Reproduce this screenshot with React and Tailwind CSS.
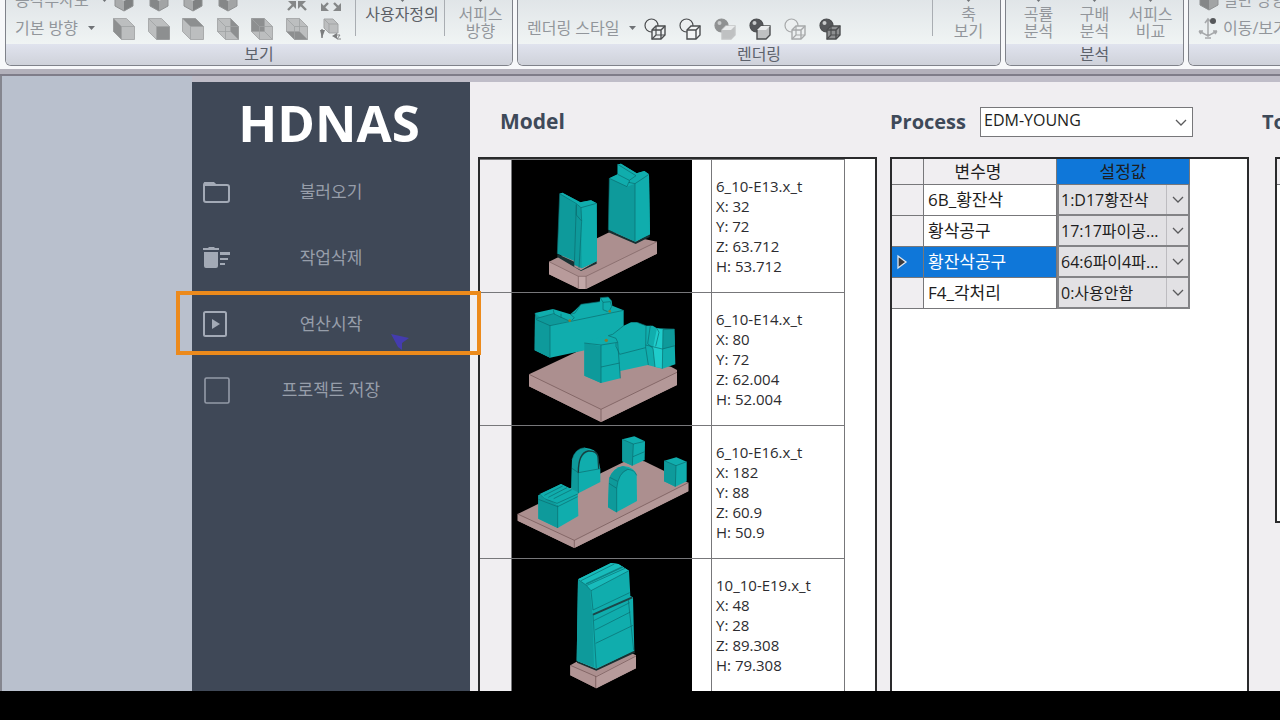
import { useState } from 'react'
import clsx from 'clsx'

const MODELS = [
  { name: '6_10-E13.x_t', x: '32', y: '72', z: '63.712', h: '53.712', Shape: ShapeE13 },
  { name: '6_10-E14.x_t', x: '80', y: '72', z: '62.004', h: '52.004', Shape: ShapeE14 },
  { name: '6_10-E16.x_t', x: '182', y: '88', z: '60.9', h: '50.9', Shape: ShapeE16 },
  { name: '10_10-E19.x_t', x: '48', y: '28', z: '89.308', h: '79.308', Shape: ShapeE19 },
]

const VARIABLES = [
  { name: '6B_황잔삭', value: '1:D17황잔삭' },
  { name: '황삭공구', value: '17:17파이공...' },
  { name: '황잔삭공구', value: '64:6파이4파...' },
  { name: 'F4_각처리', value: '0:사용안함' },
]

/* ---------- ribbon icons ---------- */

const FACES = {
  left: '0,0 8,8 8,21 0,13',
  front: '8,8 21,8 21,21 8,21',
  top: '0,0 13,0 21,8 8,8',
  right: '13,0 21,8 21,21 13,13',
  back: '0,0 13,0 13,13 0,13',
  bottom: '0,13 13,13 21,21 8,21',
}

function FaceCube({ face }) {
  return (
    <svg width="22" height="22" viewBox="-0.5 -0.5 22 22" aria-hidden="true">
      <polygon points="0,0 13,0 21,8 21,21 8,21 0,13" fill="#bcbebf" stroke="#a9abac" />
      <polygon points={FACES[face]} fill="#8d8f90" />
      <path d={face === 'left' || face === 'front' || face === 'top' ? 'M0 0L8 8H21M8 8V21' : 'M13 0V13H0M13 13L21 21M8 8H21M8 8V21M0 0L8 8'}
        fill="none" stroke="#a0a2a3" strokeWidth="0.8" />
    </svg>
  )
}

function IsoCube({ tone }) {
  return (
    <svg width="22" height="22" viewBox="0 0 22 22" aria-hidden="true">
      <polygon points="2,6 11,1 20,6 11,11" fill="#b9bbbc" />
      <polygon points="2,6 11,11 11,21 2,16" fill={tone === 'left' ? '#a9abac' : '#858788'} />
      <polygon points="20,6 11,11 11,21 20,16" fill={tone === 'left' ? '#7f8182' : '#a2a4a5'} />
      <polygon points="2,6 11,1 20,6 20,16 11,21 2,16" fill="none" stroke="#8f9192" />
    </svg>
  )
}

function ArrowsIcon({ out }) {
  return (
    <svg width="22" height="22" viewBox="0 0 22 22" fill="#858788" stroke="#858788" strokeWidth="2.4" aria-hidden="true">
      {out ? (
        <>
          <path d="M8 13L4 17M14 13L18 17M8 8L4 4M14 8L18 4" />
          <path d="M1 21V13L9 21ZM21 21V13L13 21Z" stroke="none" />
        </>
      ) : (
        <>
          <path d="M2 20L7 15M20 20L15 15M2 2L7 7M20 2L15 7" />
          <path d="M10 11V19L2 11ZM12 11V19L20 11Z" stroke="none" />
        </>
      )}
    </svg>
  )
}

function NormalIcon() {
  return (
    <svg width="22" height="22" viewBox="0 0 22 22" aria-hidden="true">
      <polygon points="4,1 13,1 18,6 18,15 9,15 4,10" fill="#bcbebf" stroke="#a3a5a6" />
      <path d="M4 1L9 6H18M9 6V15" fill="none" stroke="#a3a5a6" />
      <path d="M2 11V20" stroke="#858788" strokeWidth="1.5" />
      <path d="M0 12H5L2 20ZM12 18L17 15V21Z" fill="#7b7d7e" />
      <path d="M16 17H20L17 21H21" fill="none" stroke="#858788" />
    </svg>
  )
}

function RenderIcon({ sphere, cube, faded }) {
  const line = faded ? '#a7a9aa' : '#4b4d4f'
  const ball = { none: '#eceff0', mid: '#8f9192', dark: '#55575a' }[sphere]
  const box = { wire: '#eceff0', hidden: '#f2f4f4', solid: '#bfc1c2', dark: '#8d8f91' }[cube]
  return (
    <svg width="22" height="22" viewBox="0 0 22 22" aria-hidden="true">
      <circle cx="7.5" cy="7.5" r="6.5" fill={ball} stroke={sphere === 'mid' ? '#8f9192' : line} strokeWidth="1.2" />
      {sphere !== 'none' && <circle cx="5.5" cy="5" r="2" fill="#c9cbcc" />}
      <polygon points="8,12 12,8 21,8 21,17 17,21 8,21" fill={box}
        stroke={cube === 'solid' && faded ? '#c3c5c6' : line} strokeWidth="1.4" />
      {cube !== 'solid' && (
        <path d="M8 12H17L21 8M17 12V21" fill="none" stroke={line} strokeWidth="1.4" />
      )}
      {(cube === 'wire' || cube === 'dark') && (
        <path d="M12 8V17H21M12 17L8 21" fill="none" stroke={line} strokeWidth="1.2" />
      )}
      {cube === 'solid' && <path d="M8 12L12 8H21L17 12Z" fill="#e9ebec" />}
    </svg>
  )
}

function Caret() {
  return (
    <svg width="7" height="4" viewBox="0 0 7 4" aria-hidden="true">
      <path d="M0 0H7L3.5 4Z" fill="#6f7276" />
    </svg>
  )
}

function Chevron() {
  return (
    <svg width="12" height="7" viewBox="0 0 12 7" fill="none" stroke="#5a5a5c" strokeWidth="1.3" aria-hidden="true">
      <path d="M1 1L6 6L11 1" />
    </svg>
  )
}

/* ---------- ribbon ---------- */

function RibbonGroup({ label, className, children }) {
  return (
    <section className={clsx('flex flex-col h-24 shrink-0 rounded-b-md border border-t-0 border-[#7f828a] overflow-hidden', className)}>
      <div className="flex flex-1 items-end bg-linear-to-b from-[#d6dbe0] to-[#f0f4f4]">{children}</div>
      <div className="h-[21px] text-center leading-5 text-[#5d626c] bg-linear-to-b from-[#e0e3ee] to-[#cfd2da]">{label}</div>
    </section>
  )
}

function Divider() {
  return <div className="mb-2 w-px self-stretch bg-[#a9adb2]" />
}

function RibbonButton({ lines, className }) {
  return (
    <button className={clsx('flex flex-col items-center shrink-0 h-[50px] leading-[17px]', className)}>
      <span className="flex h-3 items-end pb-1"><Caret /></span>
      {lines.map(l => <span key={l}>{l}</span>)}
    </button>
  )
}

function IconButton({ title, children }) {
  return <button aria-label={title} className="flex w-[35px] justify-start">{children}</button>
}

function Ribbon() {
  return (
    <header className="flex h-[69px] shrink-0 items-end gap-1 overflow-hidden bg-[#f7f8fa] pl-[5px] pb-[3px] whitespace-nowrap text-[#92969b]">
      <RibbonGroup label="보기" className="w-[508px]">
        <div className="w-[107px] pb-[2px] pl-[9px]">
          <button className="flex h-7 items-center gap-3">등각투사도 <Caret /></button>
          <button className="flex h-7 items-center gap-[10px]">기본 방향 <Caret /></button>
        </div>
        <div className="w-[242px] pb-px">
          <div className="flex h-7 items-center">
            <IconButton title="등각 1"><IsoCube tone="left" /></IconButton>
            <IconButton title="등각 2"><IsoCube tone="right" /></IconButton>
            <IconButton title="등각 3"><IsoCube tone="left" /></IconButton>
            <IconButton title="등각 4"><IsoCube tone="right" /></IconButton>
            <span className="w-[35px]" />
            <IconButton title="축소"><ArrowsIcon /></IconButton>
            <IconButton title="확대"><ArrowsIcon out /></IconButton>
          </div>
          <div className="flex h-7 items-center">
            <IconButton title="좌측"><FaceCube face="left" /></IconButton>
            <IconButton title="정면"><FaceCube face="front" /></IconButton>
            <IconButton title="윗면"><FaceCube face="top" /></IconButton>
            <IconButton title="우측"><FaceCube face="right" /></IconButton>
            <IconButton title="배면"><FaceCube face="back" /></IconButton>
            <IconButton title="아랫면"><FaceCube face="bottom" /></IconButton>
            <IconButton title="수직"><NormalIcon /></IconButton>
          </div>
        </div>
        <Divider />
        <RibbonButton lines={['사용자정의']} className="w-[88px] pl-1 text-[#5c6066]" />
        <Divider />
        <RibbonButton lines={['서피스', '방향']} className="flex-1 pl-1" />
      </RibbonGroup>

      <RibbonGroup label="렌더링" className="w-[484px]">
        <button className="flex h-[30px] w-[126px] items-center gap-[10px] pb-[2px] pl-[9px]">렌더링 스타일 <Caret /></button>
        <div className="flex h-[29px] flex-1 items-center pb-px">
          <IconButton title="와이어프레임"><RenderIcon sphere="none" cube="wire" /></IconButton>
          <IconButton title="은선 제거"><RenderIcon sphere="none" cube="hidden" /></IconButton>
          <IconButton title="음영"><RenderIcon sphere="mid" cube="solid" faded /></IconButton>
          <IconButton title="음영 모서리"><RenderIcon sphere="dark" cube="solid" /></IconButton>
          <IconButton title="은선"><RenderIcon sphere="none" cube="wire" faded /></IconButton>
          <IconButton title="음영 와이어"><RenderIcon sphere="dark" cube="dark" /></IconButton>
        </div>
        <Divider />
        <RibbonButton lines={['축', '보기']} className="w-[67px] pl-1" />
      </RibbonGroup>

      <RibbonGroup label="분석" className="w-[179px]">
        <div className="flex flex-1 justify-center">
          <RibbonButton lines={['곡률', '분석']} className="w-14" />
          <RibbonButton lines={['구배', '분석']} className="w-14" />
          <RibbonButton lines={['서피스', '비교']} className="w-14" />
        </div>
      </RibbonGroup>

      <RibbonGroup label="" className="w-[240px]">
        <div className="pb-[2px] pl-[9px]">
          <button className="flex h-7 items-center gap-[3px]"><IsoCube tone="right" />일반 방향</button>
          <button className="flex h-7 items-center gap-[3px]">
            <svg width="22" height="22" viewBox="0 0 22 22" fill="none" stroke="#a6a8aa" strokeWidth="1.5" aria-hidden="true">
              <path d="M10 3V20M1 14L10 19L19 14M1 14H5M1 14L3 17M19 14H15M19 14L17 17M7 6L10 2L13 5M7 21H13" />
              <circle cx="15" cy="4" r="3" fill="#55575a" stroke="none" />
            </svg>
            이동/보기
          </button>
        </div>
      </RibbonGroup>
    </header>
  )
}

/* ---------- sidebar ---------- */

function FolderIcon() {
  return (
    <svg width="28" height="24" viewBox="0 0 28 24" aria-hidden="true">
      <path d="M3 3H10L13 5H24Q26 5 26 7V20Q26 22 24 22H3Q1 22 1 20V5Q1 3 3 3Z" fill="none" stroke="#a3aab6" strokeWidth="2" />
      <path d="M1 2H11L14 6H2Z" fill="#a3aab6" />
    </svg>
  )
}

function TrashIcon() {
  return (
    <svg width="28" height="24" viewBox="0 0 28 24" fill="#a3aab6" aria-hidden="true">
      <path d="M0 2H5L6 1H11L12 2H16V4H0ZM1 6H15V20Q15 22 13 22H3Q1 22 1 20ZM17 6H27V9H17ZM17 12H25V14H17ZM17 17H22V19H17Z" />
    </svg>
  )
}

function PlayIcon() {
  return (
    <svg width="28" height="28" viewBox="0 0 28 28" aria-hidden="true">
      <rect x="1" y="2" width="22" height="24" rx="1.5" fill="none" stroke="#a3aab6" strokeWidth="2" />
      <path d="M9 9V19L17 14Z" fill="#a3aab6" />
    </svg>
  )
}

function SquareIcon() {
  return (
    <svg width="28" height="28" viewBox="0 0 28 28" aria-hidden="true">
      <rect x="2" y="2" width="24" height="25" rx="1.5" fill="none" stroke="#949ba8" strokeWidth="1.6" />
    </svg>
  )
}

const MENU = [
  { label: '불러오기', Icon: FolderIcon },
  { label: '작업삭제', Icon: TrashIcon },
  { label: '연산시작', Icon: PlayIcon },
  { label: '프로젝트 저장', Icon: SquareIcon },
]

function Sidebar() {
  return (
    <nav className="w-[278px] shrink-0 bg-[#3f4857]">
      <h1 className="flex h-[77px] items-center justify-center pt-1 pr-1 text-[51px] font-bold leading-none text-white">HDNAS</h1>
      {MENU.map(({ label, Icon }, i) => (
        <div key={label} className="relative">
          <button className="grid h-[66px] w-full grid-cols-[48px_1fr_48px] items-center text-[17px] text-[#979eaa]">
            <span className="pl-[11px]"><Icon /></span>
            <span>{label}</span>
          </button>
          {i === 2 && (
            <>
              <div className="absolute z-10 -left-4 -right-[11px] top-0 h-16 border-4 border-[#ec8a1c] pointer-events-none" />
              <svg className="absolute left-[198px] top-[42px]" width="20" height="18" viewBox="0 0 20 18" aria-hidden="true">
                <path d="M1 1L19 5L12 10V17L8 14Z" fill="#443cae" />
              </svg>
            </>
          )}
        </div>
      ))}
    </nav>
  )
}

/* ---------- model previews ---------- */

const TEAL = '#10adad'
const TEAL_DARK = '#0e9a9b'
const TEAL_LIGHT = '#18bcbc'
const EDGE = '#0a6a6c'
const BASE = '#ac8f8f'
const BASE_SIDE = '#b29696'

function ShapeE13() {
  return (
    <svg width="180" height="132" viewBox="3 15 540 396" strokeWidth="2" strokeLinejoin="round" aria-hidden="true">
      <polygon points="114,320 298,230 438,260 438,296 225,402 205,402 114,358" fill={BASE} />
      <polygon points="114,320 202,364 205,402 114,358" fill="#b89b9b" />
      <polygon points="225,364 438,260 438,296 225,402" fill={BASE_SIDE} />
      <polygon points="202,364 225,364 225,402 205,402" fill="#c2a7a7" />
      <path d="M114 320L202 364H225L438 260M202 364V402M225 364V402" fill="none" stroke="#7c6161" />
      <polygon points="292,224 374,260 416,236 416,246 374,267 292,232" fill="#173032" />
      <polygon points="139,297 190,320 190,335 210,346 257,318 257,326 210,348 139,306" fill="#173032" />
      <polygon points="295,70 320,58 320,28 330,26 377,55 400,48 414,58 417,238 372,260 292,224" fill={TEAL_DARK} />
      <polygon points="372,86 414,58 417,238 372,260" fill={TEAL} />
      <polygon points="320,28 330,26 377,55 400,48 414,58 372,86 348,95 295,70 320,58" fill={TEAL} />
      <path d="M320 28L375 62L355 76L320 58M295 70L348 95L353 82L372 86V260M355 76V84M372 86L414 58M292 224L295 70" fill="none" stroke={EDGE} />
      <polygon points="146,116 154,113 208,142 240,136 257,145 258,318 212,340 190,330 190,318 139,296" fill={TEAL_DARK} />
      <polygon points="210,158 257,145 258,318 212,340" fill={TEAL} />
      <polygon points="146,116 154,113 208,142 240,136 257,145 210,158 195,148" fill={TEAL} />
      <path d="M146 116L196 146L190 330M196 146L210 158L212 198L204 340M196 150V180L212 198M210 158L257 145M139 296L146 116" fill="none" stroke={EDGE} />
    </svg>
  )
}

function ShapeE14() {
  return (
    <svg width="180" height="132" viewBox="33 24 540 396" strokeWidth="2" strokeLinejoin="round" aria-hidden="true">
      <polygon points="84,268 250,190 510,245 528,255 528,300 300,411 84,304" fill={BASE} />
      <polygon points="300,373 528,262 528,300 300,411" fill="#b49898" />
      <polygon points="84,268 300,373 300,411 84,304" fill="#b19494" />
      <path d="M84 268L300 373L528 262M300 373V411" fill="none" stroke="#6e5252" />
      <polygon points="102,84 156,72 208,88 222,76 240,58 296,50 298,38 322,36 332,48 334,62 368,76 368,125 338,150 280,190 147,218 101,196" fill={TEAL} />
      <polygon points="102,84 147,122 147,218 101,196" fill={TEAL_DARK} />
      <polygon points="106,100 158,88 182,96 205,108 147,122" fill={TEAL_DARK} />
      <path d="M102 84L106 104L147 122L368 76M147 122V218M108 100L158 86L178 96L205 108M156 72L160 88M180 86V98M208 88L220 98L212 106M208 88L222 84L240 58L296 50M298 38L306 52L328 50L332 64L325 78M298 38L322 36L332 48M306 52V74L320 80" fill="none" stroke={EDGE} />
      <polygon points="250,174 320,148 335,150 368,122 390,112 408,112 435,122 455,122 468,130 520,132 523,238 484,251 440,240 358,258 358,280 300,294 250,272" fill={TEAL} />
      <polygon points="250,174 300,184 300,294 250,272" fill={TEAL_DARK} />
      <polygon points="486,134 520,132 522,184 484,192" fill={TEAL_DARK} />
      <polygon points="468,130 486,134 484,250 462,246 456,190" fill="#1fcccb" />
      <path d="M250 174L300 180L350 172L345 160L322 152L335 148L368 122M300 180V294M300 246L356 234M350 172L358 280M346 186L356 208L434 188M408 112L435 122L434 188L442 240M448 122L440 176L456 190L462 246M468 130L474 142L464 184M520 132L486 134L484 251M434 180L484 192L522 182M345 174V186" fill="none" stroke={EDGE} />
      <circle cx="316" cy="166" r="5" fill="#8a7a2e" />
      <circle cx="326" cy="79" r="4" fill="#8a7a2e" />
      <circle cx="206" cy="107" r="4" fill="#8a7a2e" />
    </svg>
  )
}

function ShapeE16() {
  return (
    <svg width="180" height="132" viewBox="33 18 540 396" strokeWidth="2" strokeLinejoin="round" aria-hidden="true">
      <polygon points="50,282 385,118 430,124 562,188 562,214 220,384 50,302" fill={BASE} />
      <polygon points="220,361 562,188 562,214 220,384" fill="#b49898" />
      <polygon points="50,282 220,361 220,384 50,302" fill="#b19494" />
      <path d="M50 282L220 361L562 188M220 361V384" fill="none" stroke="#6e5252" />

      <polygon points="364,58 400,49 432,64 431,120 394,137 364,124" fill={TEAL} />
      <polygon points="364,58 397,72 394,137 364,124" fill={TEAL_DARK} />
      <path d="M364 58L397 72L432 64M397 72L394 137M396 110L431 95" fill="none" stroke={EDGE} />

      <polygon points="490,122 526,112 557,125 557,184 523,200 489,184" fill={TEAL} />
      <polygon points="490,122 525,137 523,200 489,184" fill={TEAL_DARK} />
      <path d="M490 122L525 137L557 125M525 137L523 200" fill="none" stroke={EDGE} />

      <path d="M211 210L213 120Q222 84 252 83Q286 86 290 108L298 148V186L232 220Z" fill={TEAL} />
      <path d="M211 210L213 120Q222 88 250 83L268 92Q234 104 232 152V220Z" fill={TEAL_DARK} />
      <path d="M232 220L232 158L298 146M213 120Q222 84 252 83M213 145L232 158" fill="none" stroke={EDGE} />
      <path d="M232 158Q232 98 262 93Q288 92 291 110L293 146" fill="none" stroke="#163f40" strokeWidth="4" />

      <path d="M321 262L324 176Q336 142 368 138Q402 142 407 166L408 243L346 277Z" fill={TEAL} />
      <path d="M321 262L324 176Q336 144 366 138L386 148Q350 158 347 205L346 277Z" fill={TEAL_DARK} />
      <path d="M347 277L347 205Q352 158 380 148Q402 150 407 166M324 190L347 205M326 172L350 184" fill="none" stroke={EDGE} />

      <polygon points="112,226 180,192 230,220 232,288 170,324 112,296" fill={TEAL} />
      <polygon points="112,226 130,230 170,256 170,324 112,296" fill={TEAL_DARK} />
      <polygon points="116,222 180,192 230,216 230,228 170,258 150,240 130,240" fill={TEAL} />
      <path d="M116 222L130 236L168 250L230 222M170 256V324M130 226L185 198M142 232L198 203M158 236L212 209M112 238L170 260L230 230" fill="none" stroke={EDGE} />
    </svg>
  )
}

function ShapeE19() {
  return (
    <svg width="180" height="132" viewBox="33 27 540 396" strokeWidth="2" strokeLinejoin="round" aria-hidden="true">
      <polygon points="208,346 240,328 390,308 405,316 405,355 286,415 208,376" fill={BASE} />
      <polygon points="286,378 405,316 405,355 286,415" fill="#b79b9b" />
      <polygon points="208,346 286,380 286,415 208,376" fill="#b19494" />
      <path d="M208 346L286 380L405 318M284 378V415" fill="none" stroke="#6e5252" />
      <polygon points="228,332 286,356 400,300 402,308 286,362 228,338" fill="#173032" />
      <polygon points="231,88 330,39 352,42 384,62 388,138 396,142 400,302 286,356 227,332" fill={TEAL} />
      <polygon points="231,88 266,112 274,192 279,352 227,332" fill={TEAL_DARK} />
      <polygon points="231,88 330,39 352,42 384,62 270,122 255,105" fill={TEAL_LIGHT} />
      <path d="M231 88L255 105L270 122L384 62M240 92L340 42M258 106L372 55M270 122L276 180L386 128M278 212L386 158M282 240L388 186M284 280L396 226M276 192L286 356M382 150L398 300" fill="none" stroke={EDGE} />
      <path d="M255 102L366 50" stroke="#0d8587" strokeWidth="5" />
      <path d="M276 194L394 142" stroke="#1c4648" strokeWidth="6" />
    </svg>
  )
}

/* ---------- panels ---------- */

function ModelPanel() {
  return (
    <section className="flex w-[399px] shrink-0 flex-col">
      <h2 className="flex h-[75px] items-center pl-[22px] pt-1 text-[21px] font-bold text-[#3e4959]">Model</h2>
      <div className="flex-1 min-h-0 overflow-hidden border-2 border-b-0 border-[#2a2a2c] bg-white">
        <table className="table-fixed w-[365px] border-separate border-spacing-0 border-t border-[#77777a]">
          <tbody>
            {MODELS.map(({ Shape, ...m }) => (
              <tr key={m.name} className="h-[133px]">
                <td className="w-8 border-b border-r border-[#77777a] bg-[#f0eef1] p-0" />
                <td className="w-[200px] border-b border-r border-[#77777a] p-0 align-top">
                  <div className="h-[132px] w-[180px] bg-black"><Shape /></div>
                </td>
                <td className="border-b border-r border-[#77777a] p-0 pl-1 align-middle text-[15px] leading-5 text-[#2c2c30]">
                  <div>{m.name}</div>
                  <div>X: {m.x}</div>
                  <div>Y: {m.y}</div>
                  <div>Z: {m.z}</div>
                  <div>H: {m.h}</div>
                </td>
              </tr>
            ))}
          </tbody>
        </table>
      </div>
    </section>
  )
}

function ProcessPanel() {
  const [selected, setSelected] = useState(2)

  return (
    <section className="flex w-[359px] shrink-0 flex-col">
      <div className="flex h-[75px] items-center gap-[14px] pt-1">
        <label htmlFor="process" className="text-[20px] font-bold text-[#3e4959]">Process</label>
        <div className="relative">
          <select id="process" className="block h-[30px] w-[213px] appearance-none border border-[#77777a] bg-white pb-1 pl-[3px] leading-6 text-[#1d1d20]">
            <option>EDM-YOUNG</option>
          </select>
          <span className="absolute right-[6px] top-3 pointer-events-none"><Chevron /></span>
        </div>
      </div>
      <div className="flex-1 min-h-0 overflow-hidden border-2 border-b-0 border-[#2a2a2c] bg-white">
        <table className="table-fixed w-[298px] border-separate border-spacing-0 text-[17px] text-[#1d1d20]">
          <thead>
            <tr className="h-[26px] leading-6">
              <th className="w-8 border-b border-r border-[#77777a] bg-[#f0eef1] p-0" />
              <th className="w-[133px] border-b border-r border-[#77777a] bg-[#f0eef1] p-0 pr-6 font-normal">변수명</th>
              <th className="border-b border-r border-[#77777a] bg-[#0f77d9] p-0 font-normal">설정값</th>
            </tr>
          </thead>
          <tbody>
            {VARIABLES.map((v, i) => (
              <tr key={v.name} onClick={() => setSelected(i)} className="h-[31px]">
                <td className={clsx('border-b border-r border-[#77777a] p-0', i === selected ? 'bg-[#0f77d9]' : 'bg-[#f0eef1]')}>
                  {i === selected && (
                    <svg className="ml-1" width="12" height="16" viewBox="0 0 12 16" aria-hidden="true">
                      <path d="M2 2V14L10 8Z" fill="#3a3a3c" stroke="#dfe8f2" strokeWidth="1.3" />
                    </svg>
                  )}
                </td>
                <td className={clsx('border-b border-r border-[#77777a] p-0 pl-1', i === selected && 'bg-[#0f77d9] text-white')}>{v.name}</td>
                <td className="border-b-2 border-x-2 border-[#838386] bg-[#e2e1e4] p-0">
                  <div className="relative">
                    <select aria-label={v.name} className="block h-[29px] w-full appearance-none bg-transparent pl-[2px] text-[16px]">
                      <option>{v.value}</option>
                    </select>
                    <span className="absolute right-0 top-0 flex h-full w-[22px] items-center justify-center border-l border-[#bdbcc0] pointer-events-none"><Chevron /></span>
                  </div>
                </td>
              </tr>
            ))}
          </tbody>
        </table>
      </div>
    </section>
  )
}

function ToolPanel() {
  return (
    <section className="flex flex-1 min-w-0 flex-col overflow-hidden">
      <h2 className="flex h-[75px] shrink-0 items-center pt-1 text-[20px] font-bold text-[#3e4959]">Tool</h2>
      <div className="ml-[13px] h-[366px] w-[360px] border-2 border-[#2a2a2c] bg-white">
        <div className="h-[26px] border-b border-[#77777a] bg-[#f0eef1]" />
      </div>
    </section>
  )
}

export default function App() {
  return (
    <div className="flex h-screen flex-col overflow-hidden bg-black font-['Open_Sans','Noto_Sans_CJK_KR',sans-serif] text-[16px]">
      <Ribbon />
      <div className="h-[7px] shrink-0 border-b-2 border-[#7f7d89] bg-[#b3b1bb]" />
      <div className="flex flex-1 min-h-0 border-l-2 border-[#85868f] bg-[#b9c0cd]">
        <div className="w-[190px] shrink-0" />
        <div className="flex flex-1 min-w-0 flex-col bg-[#bfbdc8] pt-[6px]">
          <main className="flex flex-1 min-h-0">
            <Sidebar />
            <div className="flex flex-1 min-w-0 gap-[13px] overflow-hidden bg-[#f0eef1] pl-2">
              <ModelPanel />
              <ProcessPanel />
              <ToolPanel />
            </div>
          </main>
        </div>
      </div>
      <footer className="h-[29px] shrink-0 bg-black" />
    </div>
  )
}
